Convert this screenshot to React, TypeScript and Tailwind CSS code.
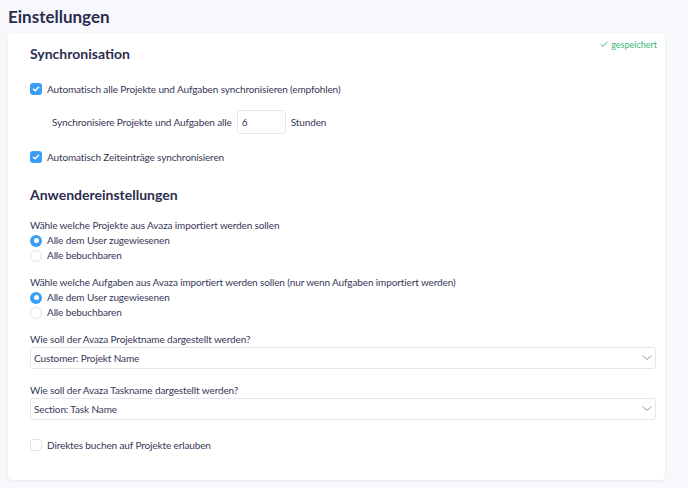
import React, { useState } from 'react';

function Check({ checked }: { checked: boolean }) {
  return checked ? (
    <span className="flex h-[12px] w-[12px] shrink-0 items-center justify-center rounded-[3px] bg-[#3b9ef5]">
      <svg width="8" height="8" viewBox="0 0 10 10" fill="none">
        <path d="M1.8 5.2 4 7.3 8.3 2.8" stroke="white" strokeWidth="1.8" strokeLinecap="round" strokeLinejoin="round" />
      </svg>
    </span>
  ) : (
    <span className="h-[12px] w-[12px] shrink-0 rounded-[3px] border border-[#e3e4ea] bg-white" />
  );
}

function Radio({ checked }: { checked: boolean }) {
  return checked ? (
    <span className="flex h-[12px] w-[12px] shrink-0 items-center justify-center rounded-full bg-[#3b9ef5]">
      <span className="h-[5px] w-[5px] rounded-full bg-white" />
    </span>
  ) : (
    <span className="h-[12px] w-[12px] shrink-0 rounded-full border border-[#e3e4ea] bg-white" />
  );
}

function SelectBox({ value }: { value: string }) {
  return (
    <div className="flex h-[22px] items-center justify-between rounded-[3px] border border-[#e6e7ec] bg-white pl-[3px] pr-[3px]">
      <span>{value}</span>
      <svg width="10" height="6" viewBox="0 0 10 6" fill="none">
        <path d="M1 1l4 3.5L9 1" stroke="#b9bccb" strokeWidth="1.2" strokeLinecap="round" />
      </svg>
    </div>
  );
}

export default function App() {
  const [hours] = useState('6');

  return (
    <div className="min-h-[488px] bg-[#f7f8fb] pl-[8px] pr-[23px] text-[10px] tracking-[-0.12px] text-[#363756]" style={{ fontFamily: 'Lato, "Noto Sans", sans-serif' }}>
      <h1 className="pt-[6px] text-[17px] font-bold leading-[21px] tracking-normal text-[#2b2d50]">Einstellungen</h1>

      <div className="relative mt-[6px] rounded-[4px] bg-white pb-[28px] pl-[22px] pr-[9px] pt-[11px] shadow-[0_1px_3px_rgba(30,35,60,0.08)]">
        <div className="absolute right-[8px] top-[5px] flex items-center gap-[3px] text-[9px] tracking-normal text-[#3bb778]">
          <svg width="8" height="7" viewBox="0 0 8 7" fill="none">
            <path d="M1 3.6 3 5.5 7 1.2" stroke="#3bb778" strokeWidth="1" strokeLinecap="round" />
          </svg>
          gespeichert
        </div>

        <h2 className="text-[14px] font-bold leading-[20px] tracking-normal text-[#2b2d50]">Synchronisation</h2>

        <label className="mt-[18px] flex h-[14px] items-center gap-[5px]">
          <Check checked />
          Automatisch alle Projekte und Aufgaben synchronisieren (empfohlen)
        </label>

        <div className="mt-[14px] flex items-center pl-[22px]">
          <span>Synchronisiere Projekte und Aufgaben alle</span>
          <input
            readOnly
            value={hours}
            className="ml-[5px] h-[24px] w-[49px] rounded-[3px] border border-[#e6e7ec] px-[4px] text-[10px] text-[#363756] outline-none"
          />
          <span className="ml-[5px]">Stunden</span>
        </div>

        <label className="mt-[16px] flex h-[14px] items-center gap-[5px]">
          <Check checked />
          Automatisch Zeiteinträge synchronisieren
        </label>

        <h2 className="mt-[21px] text-[14px] font-bold leading-[20px] tracking-normal text-[#2b2d50]">Anwendereinstellungen</h2>

        <p className="mt-[13px] h-[15px] leading-[15px]">Wähle welche Projekte aus Avaza importiert werden sollen</p>
        <label className="flex h-[15px] items-center gap-[5px]">
          <Radio checked />
          Alle dem User zugewiesenen
        </label>
        <label className="flex h-[15px] items-center gap-[5px]">
          <Radio checked={false} />
          Alle bebuchbaren
        </label>

        <p className="mt-[12px] h-[15px] leading-[15px]">Wähle welche Aufgaben aus Avaza importiert werden sollen (nur wenn Aufgaben importiert werden)</p>
        <label className="flex h-[15px] items-center gap-[5px]">
          <Radio checked />
          Alle dem User zugewiesenen
        </label>
        <label className="flex h-[15px] items-center gap-[5px]">
          <Radio checked={false} />
          Alle bebuchbaren
        </label>

        <p className="mt-[12px] h-[15px] leading-[15px]">Wie soll der Avaza Projektname dargestellt werden?</p>
        <SelectBox value="Customer: Projekt Name" />

        <p className="mt-[14px] h-[15px] leading-[15px]">Wie soll der Avaza Taskname dargestellt werden?</p>
        <SelectBox value="Section: Task Name" />

        <label className="mt-[18px] flex h-[14px] items-center gap-[5px]">
          <Check checked={false} />
          Direktes buchen auf Projekte erlauben
        </label>
      </div>
    </div>
  );
}
